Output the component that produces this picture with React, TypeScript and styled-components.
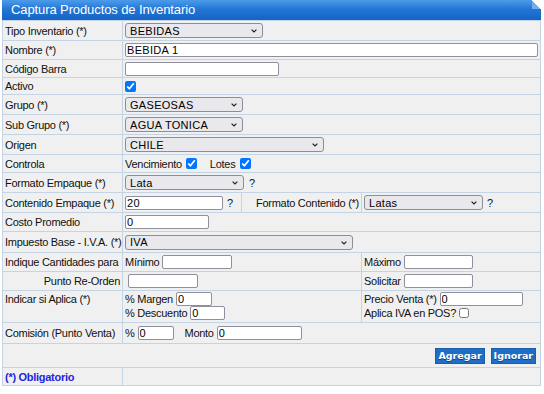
import React from 'react';
import styled, { createGlobalStyle } from 'styled-components';

const GlobalStyle = createGlobalStyle`
  body {
    margin: 0;
    background: #fff;
    font-family: "Liberation Sans", Arial, sans-serif;
    font-size: 11px;
    letter-spacing: -0.28px;
    color: #111;
  }
`;

const LINE = '#c4d4e4';

const Panel = styled.div`
  width: 539px;
  margin-left: 2px;
`;

const TitleBar = styled.div`
  position: relative;
  height: 20px;
  padding-left: 9px;
  background: linear-gradient(#4d9cea, #2476d6 45%, #1364c4);
  color: #fff;
  font-size: 13px;
  letter-spacing: -0.1px;
  line-height: 20px;
`;

const Corner = styled.span`
  position: absolute;
  top: 0;
  right: 0;
  width: 9px;
  height: 9px;
  background: linear-gradient(to bottom left, #fff 50%, #6eaef0 50%);
`;

const Form = styled.div`
  border-left: 1px solid ${LINE};
  border-right: 1px solid ${LINE};
  border-top: 1px solid ${LINE};
`;

const Row = styled.div<{ $cols?: string; $h: number }>`
  display: grid;
  grid-template-columns: ${p => p.$cols || '119px 1fr'};
  height: ${p => p.$h}px;
  box-sizing: border-box;
  border-bottom: 1px solid ${LINE};
  background: #f0f0f0;
`;

const Cell = styled.div<{ $right?: boolean; $top?: boolean; $pl?: number; $pr?: number }>`
  display: flex;
  flex-direction: ${p => (p.$top ? 'column' : 'row')};
  align-items: ${p => (p.$top ? 'flex-start' : 'center')};
  justify-content: ${p => (p.$right ? 'flex-end' : 'flex-start')};
  padding: ${p => (p.$top ? '1px' : '0')} ${p => p.$pr ?? 2}px 0 ${p => p.$pl ?? 2}px;
  line-height: 14px;
  white-space: nowrap;
  min-width: 0;
  & + & {
    border-left: 1px solid ${LINE};
  }
`;

const Line = styled.div`
  display: flex;
  align-items: center;
  height: 14px;
`;

const Text = styled.span<{ $ml?: number }>`
  margin-left: ${p => p.$ml ?? 0}px;
`;

const SelectWrap = styled.span<{ $w: number }>`
  position: relative;
  display: inline-flex;
  width: ${p => p.$w}px;
  height: 15px;
`;

const Select = styled.select`
  appearance: none;
  width: 100%;
  height: 100%;
  box-sizing: border-box;
  margin: 0;
  padding: 0 14px 0 4px;
  border: 1px solid #8d8d98;
  border-radius: 3px;
  background: #e9e9ed;
  font-family: "Liberation Sans", Arial, sans-serif;
  font-size: 11px;
  letter-spacing: 0.3px;
  color: #000;
`;

const Chevron = styled.svg`
  position: absolute;
  right: 6px;
  top: 6px;
  pointer-events: none;
`;

const Dropdown = ({ w, value }: { w: number; value: string }) => (
  <SelectWrap $w={w}>
    <Select defaultValue={value}>
      <option>{value}</option>
    </Select>
    <Chevron width="6" height="4" viewBox="0 0 6 4">
      <polyline points="0.6,0.6 3,3 5.4,0.6" fill="none" stroke="#222" strokeWidth="1.2" />
    </Chevron>
  </SelectWrap>
);

const TextInput = styled.input<{ $w: number; $ml?: number }>`
  width: ${p => p.$w}px;
  height: 14px;
  box-sizing: border-box;
  margin: 0 0 0 ${p => p.$ml ?? 0}px;
  padding: 0 1px;
  border: 1px solid #8f8f9d;
  border-radius: 2px;
  background: #fff;
  font-family: "Liberation Sans", Arial, sans-serif;
  font-size: 11px;
  letter-spacing: 0.3px;
  color: #000;
`;

const Check = styled.input<{ $s: number; $ml?: number }>`
  width: ${p => p.$s}px;
  height: ${p => p.$s}px;
  margin: 0 0 0 ${p => p.$ml ?? 0}px;
`;

const Hint = styled.span<{ $ml: number }>`
  margin-left: ${p => p.$ml}px;
`;

const Button = styled.button`
  height: 16px;
  margin-left: 6px;
  padding: 0 2px;
  border: 1px solid #1a5da8;
  background: #1f6ec6;
  color: #fff;
  font-family: "DejaVu Sans", Verdana, sans-serif;
  font-size: 9.5px;
  font-weight: bold;
  letter-spacing: 0;
  text-shadow: 0 1px 0 #0d3f78;
  line-height: 14px;
`;

const Required = styled.span`
  color: #2424e0;
  font-weight: bold;
`;

const App = () => {
  return (
    <>
      <GlobalStyle />
      <Panel>
        <TitleBar>
          Captura Productos de Inventario
          <Corner />
        </TitleBar>
        <Form>
          <Row $h={20}>
            <Cell>Tipo Inventario (*)</Cell>
            <Cell>
              <Dropdown w={138} value="BEBIDAS" />
            </Cell>
          </Row>
          <Row $h={19}>
            <Cell>Nombre (*)</Cell>
            <Cell>
              <TextInput $w={413} defaultValue="BEBIDA 1" />
            </Cell>
          </Row>
          <Row $h={18}>
            <Cell>Código Barra</Cell>
            <Cell>
              <TextInput $w={154} />
            </Cell>
          </Row>
          <Row $h={17}>
            <Cell>Activo</Cell>
            <Cell>
              <Check type="checkbox" $s={11} defaultChecked />
            </Cell>
          </Row>
          <Row $h={20}>
            <Cell>Grupo (*)</Cell>
            <Cell>
              <Dropdown w={118} value="GASEOSAS" />
            </Cell>
          </Row>
          <Row $h={20}>
            <Cell>Sub Grupo (*)</Cell>
            <Cell>
              <Dropdown w={118} value="AGUA TONICA" />
            </Cell>
          </Row>
          <Row $h={20}>
            <Cell>Origen</Cell>
            <Cell>
              <Dropdown w={199} value="CHILE" />
            </Cell>
          </Row>
          <Row $h={18}>
            <Cell>Controla</Cell>
            <Cell>
              <Text>Vencimiento</Text>
              <Check type="checkbox" $s={11} $ml={4} defaultChecked />
              <Text $ml={13}>Lotes</Text>
              <Check type="checkbox" $s={11} $ml={5} defaultChecked />
            </Cell>
          </Row>
          <Row $h={20}>
            <Cell>Formato Empaque (*)</Cell>
            <Cell>
              <Dropdown w={119} value="Lata" />
              <Hint $ml={5}>?</Hint>
            </Cell>
          </Row>
          <Row $h={20} $cols="119px 119px 120px 1fr">
            <Cell>Contenido Empaque (*)</Cell>
            <Cell>
              <TextInput $w={98} defaultValue="20" />
              <Hint $ml={4}>?</Hint>
            </Cell>
            <Cell $right>Formato Contenido (*)</Cell>
            <Cell>
              <Dropdown w={119} value="Latas" />
              <Hint $ml={4}>?</Hint>
            </Cell>
          </Row>
          <Row $h={19}>
            <Cell>Costo Promedio</Cell>
            <Cell>
              <TextInput $w={84} defaultValue="0" />
            </Cell>
          </Row>
          <Row $h={21}>
            <Cell>Impuesto Base - I.V.A. (*)</Cell>
            <Cell>
              <Dropdown w={228} value="IVA" />
            </Cell>
          </Row>
          <Row $h={19} $cols="119px 239px 1fr">
            <Cell>Indique Cantidades para</Cell>
            <Cell>
              <Text>Mínimo</Text>
              <TextInput $w={70} $ml={3} />
            </Cell>
            <Cell>
              <Text>Máximo</Text>
              <TextInput $w={69} $ml={3} />
            </Cell>
          </Row>
          <Row $h={19} $cols="119px 239px 1fr">
            <Cell $right>Punto Re-Orden</Cell>
            <Cell $pl={5}>
              <TextInput $w={70} />
            </Cell>
            <Cell>
              <Text>Solicitar</Text>
              <TextInput $w={69} $ml={3} />
            </Cell>
          </Row>
          <Row $h={32} $cols="119px 239px 1fr">
            <Cell $top>Indicar si Aplica (*)</Cell>
            <Cell $top>
              <Line>
                <Text>% Margen</Text>
                <TextInput $w={36} $ml={3} defaultValue="0" />
              </Line>
              <Line>
                <Text>% Descuento</Text>
                <TextInput $w={35} $ml={3} defaultValue="0" />
              </Line>
            </Cell>
            <Cell $top>
              <Line>
                <Text>Precio Venta (*)</Text>
                <TextInput $w={83} $ml={3} defaultValue="0" />
              </Line>
              <Line>
                <Text>Aplica IVA en POS?</Text>
                <Check type="checkbox" $s={10} $ml={3} />
              </Line>
            </Cell>
          </Row>
          <Row $h={21}>
            <Cell>Comisión (Punto Venta)</Cell>
            <Cell>
              <Text>%</Text>
              <TextInput $w={36} $ml={3} defaultValue="0" />
              <Text $ml={11}>Monto</Text>
              <TextInput $w={85} $ml={3} defaultValue="0" />
            </Cell>
          </Row>
          <Row $h={24} $cols="1fr">
            <Cell $right $pr={4}>
              <Button>Agregar</Button>
              <Button>Ignorar</Button>
            </Cell>
          </Row>
          <Row $h={18}>
            <Cell>
              <Required>(*) Obligatorio</Required>
            </Cell>
            <Cell />
          </Row>
        </Form>
      </Panel>
    </>
  );
};

export default App;
